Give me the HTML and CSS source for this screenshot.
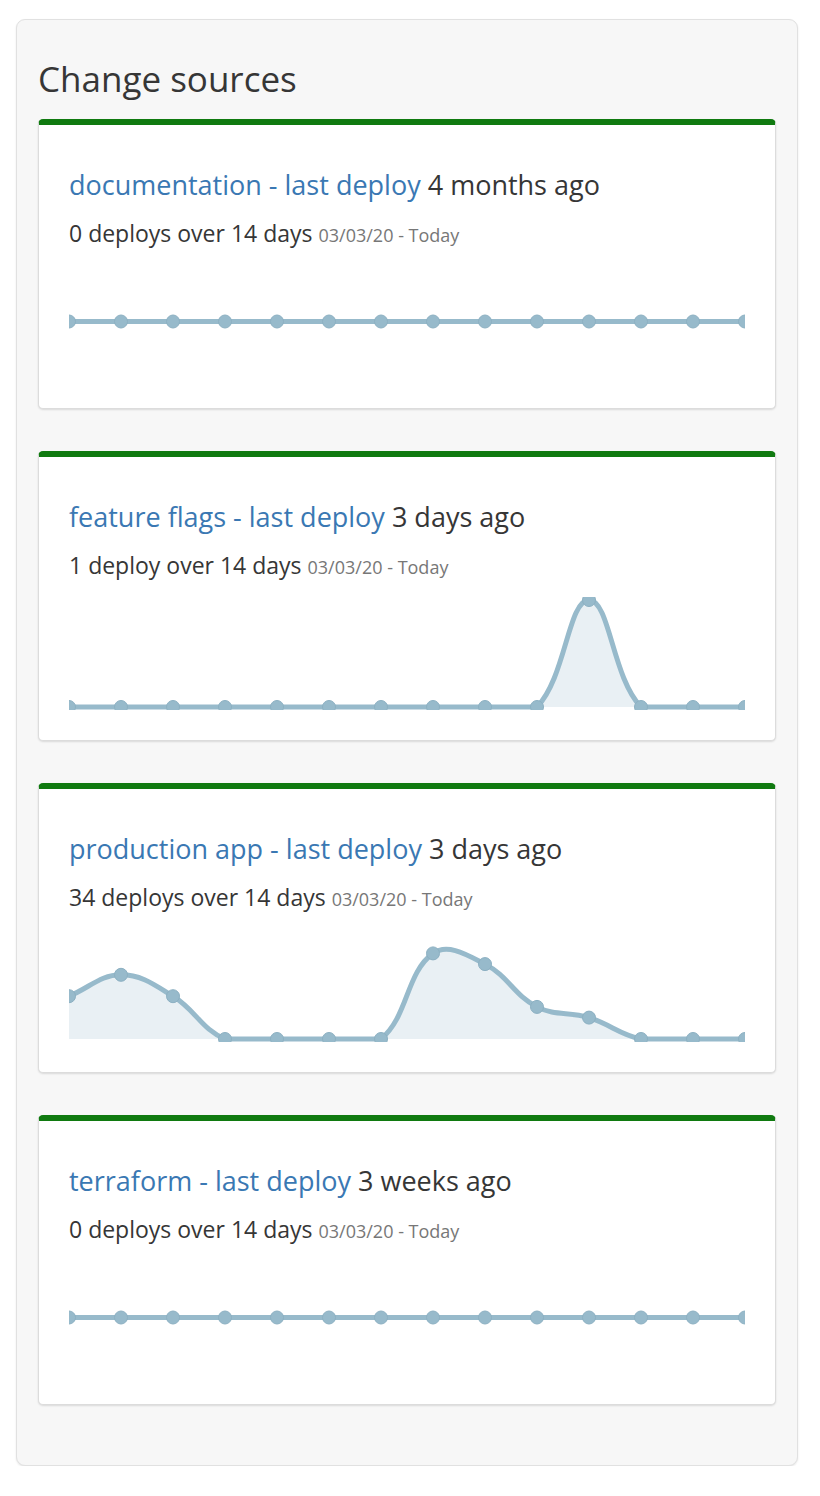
FILE: index.html
```html
<!DOCTYPE html>
<html lang="en">
<head>
<meta charset="utf-8">
<title>Change sources</title>
<link rel="stylesheet" href="styles.css">
</head>
<body>
<section class="panel">
  <h2 class="panel-title">Change sources</h2>

  <article class="card">
    <h3 class="card-title"><a href="#">documentation - last deploy</a> 4 months ago</h3>
    <p class="card-sub">0 deploys over 14 days <span class="range">03/03/20 - Today</span></p>
    <svg class="chart" width="676" height="113" viewBox="0 0 676 113">
      <path class="line" d="M0,56.5 L676,56.5"/>
      <g class="pts">
        <circle cx="0" cy="56.5" r="6.5"/><circle cx="52" cy="56.5" r="6.5"/><circle cx="104" cy="56.5" r="6.5"/><circle cx="156" cy="56.5" r="6.5"/><circle cx="208" cy="56.5" r="6.5"/><circle cx="260" cy="56.5" r="6.5"/><circle cx="312" cy="56.5" r="6.5"/><circle cx="364" cy="56.5" r="6.5"/><circle cx="416" cy="56.5" r="6.5"/><circle cx="468" cy="56.5" r="6.5"/><circle cx="520" cy="56.5" r="6.5"/><circle cx="572" cy="56.5" r="6.5"/><circle cx="624" cy="56.5" r="6.5"/><circle cx="676" cy="56.5" r="6.5"/>
      </g>
    </svg>
  </article>

  <article class="card">
    <h3 class="card-title"><a href="#">feature flags - last deploy</a> 3 days ago</h3>
    <p class="card-sub">1 deploy over 14 days <span class="range">03/03/20 - Today</span></p>
    <svg class="chart" width="676" height="113" viewBox="0 0 676 113">
      <path class="area" d="M0,110 L468,110 C496.9,80.2 499.2,3 520,3 C540.8,3 543.1,80.2 572,110 L676,110 Z"/>
      <path class="line" d="M0,110 L468,110 C496.9,80.2 499.2,3 520,3 C540.8,3 543.1,80.2 572,110 L676,110"/>
      <g class="pts">
        <circle cx="0" cy="110" r="6.5"/><circle cx="52" cy="110" r="6.5"/><circle cx="104" cy="110" r="6.5"/><circle cx="156" cy="110" r="6.5"/><circle cx="208" cy="110" r="6.5"/><circle cx="260" cy="110" r="6.5"/><circle cx="312" cy="110" r="6.5"/><circle cx="364" cy="110" r="6.5"/><circle cx="416" cy="110" r="6.5"/><circle cx="468" cy="110" r="6.5"/><circle cx="520" cy="3" r="6.5"/><circle cx="572" cy="110" r="6.5"/><circle cx="624" cy="110" r="6.5"/><circle cx="676" cy="110" r="6.5"/>
      </g>
    </svg>
  </article>

  <article class="card">
    <h3 class="card-title"><a href="#">production app - last deploy</a> 3 days ago</h3>
    <p class="card-sub">34 deploys over 14 days <span class="range">03/03/20 - Today</span></p>
    <svg class="chart" width="676" height="113" viewBox="0 0 676 113">
      <path class="area" d="M0,67.2 C20.8,58.64 31.2,45.8 52,45.8 C72.8,45.8 85.07,55.52 104,67.2 C126.67,81.2 132.53,100.34 156,110 L312,110 C339.38,87.46 336.81,43.98 364,24.4 C378.41,14.02 397.66,25.67 416,35.1 C439.26,47.07 444.74,65.93 468,77.9 C486.34,87.33 499.8,82.37 520,88.6 C541.4,95.21 550.39,105.55 572,110 L676,110 L0,110 Z"/>
      <path class="line" d="M0,67.2 C20.8,58.64 31.2,45.8 52,45.8 C72.8,45.8 85.07,55.52 104,67.2 C126.67,81.2 132.53,100.34 156,110 L312,110 C339.38,87.46 336.81,43.98 364,24.4 C378.41,14.02 397.66,25.67 416,35.1 C439.26,47.07 444.74,65.93 468,77.9 C486.34,87.33 499.8,82.37 520,88.6 C541.4,95.21 550.39,105.55 572,110 L676,110"/>
      <g class="pts">
        <circle cx="0" cy="67.2" r="6.5"/><circle cx="52" cy="45.8" r="6.5"/><circle cx="104" cy="67.2" r="6.5"/><circle cx="156" cy="110" r="6.5"/><circle cx="208" cy="110" r="6.5"/><circle cx="260" cy="110" r="6.5"/><circle cx="312" cy="110" r="6.5"/><circle cx="364" cy="24.4" r="6.5"/><circle cx="416" cy="35.1" r="6.5"/><circle cx="468" cy="77.9" r="6.5"/><circle cx="520" cy="88.6" r="6.5"/><circle cx="572" cy="110" r="6.5"/><circle cx="624" cy="110" r="6.5"/><circle cx="676" cy="110" r="6.5"/>
      </g>
    </svg>
  </article>

  <article class="card">
    <h3 class="card-title"><a href="#">terraform - last deploy</a> 3 weeks ago</h3>
    <p class="card-sub">0 deploys over 14 days <span class="range">03/03/20 - Today</span></p>
    <svg class="chart" width="676" height="113" viewBox="0 0 676 113">
      <path class="line" d="M0,56.5 L676,56.5"/>
      <g class="pts">
        <circle cx="0" cy="56.5" r="6.5"/><circle cx="52" cy="56.5" r="6.5"/><circle cx="104" cy="56.5" r="6.5"/><circle cx="156" cy="56.5" r="6.5"/><circle cx="208" cy="56.5" r="6.5"/><circle cx="260" cy="56.5" r="6.5"/><circle cx="312" cy="56.5" r="6.5"/><circle cx="364" cy="56.5" r="6.5"/><circle cx="416" cy="56.5" r="6.5"/><circle cx="468" cy="56.5" r="6.5"/><circle cx="520" cy="56.5" r="6.5"/><circle cx="572" cy="56.5" r="6.5"/><circle cx="624" cy="56.5" r="6.5"/><circle cx="676" cy="56.5" r="6.5"/>
      </g>
    </svg>
  </article>
</section>
</body>
</html>
```

FILE: styles.css
```css
html, body {
  margin: 0;
  padding: 0;
  background: #ffffff;
}

body {
  padding: 19px 22px 0 16px;
  font-family: "Open Sans", "Noto Sans", "DejaVu Sans", sans-serif;
  color: #333333;
}

.panel {
  background: #f7f7f7;
  border: 1px solid #e1e1e1;
  border-radius: 9px;
  box-shadow: 0 1px 2px rgba(0, 0, 0, 0.1);
  padding: 38px 21px 60px 21px;
  display: flex;
  flex-direction: column;
  gap: 42px;
}

.panel-title {
  font-size: 35px;
  font-weight: 400;
  line-height: 42px;
  margin: 0 0 -23px 0;
  color: #363636;
}

.card {
  background: #ffffff;
  border: 1px solid #dcdcdc;
  border-top: 6px solid #107a10;
  border-radius: 5px;
  box-shadow: 0 1px 2px rgba(0, 0, 0, 0.12);
  padding: 44px 30px 30px 30px;
  display: flex;
  flex-direction: column;
}

.card-title {
  font-size: 27px;
  font-weight: 400;
  line-height: 32px;
  margin: 0;
  color: #363636;
}

.card-title a {
  color: #3a78b3;
  text-decoration: none;
}

.card-sub {
  font-size: 23px;
  line-height: 28px;
  margin: 18px 0 0 0;
  color: #363636;
}

.range {
  font-size: 18px;
  line-height: 18px;
  color: #777777;
}

.chart {
  display: block;
  margin-top: 18px;
  overflow: hidden;
}

.chart .area {
  fill: #e9f0f4;
  stroke: none;
}

.chart .line {
  fill: none;
  stroke: #97bacb;
  stroke-width: 5;
}

.chart .pts circle {
  fill: #97bacb;
  stroke: #8cb0c2;
  stroke-width: 1;
}
```
